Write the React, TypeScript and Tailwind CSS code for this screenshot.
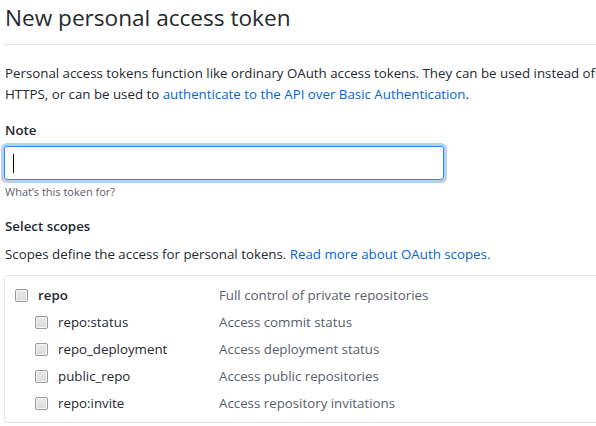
import type { ReactNode } from 'react';

const font = { fontFamily: '"Open Sans", "Noto Sans", sans-serif' };

interface Scope {
  name: string;
  description: string;
  child?: boolean;
}

const scopes: Scope[] = [
  { name: 'repo', description: 'Full control of private repositories' },
  { name: 'repo:status', description: 'Access commit status', child: true },
  { name: 'repo_deployment', description: 'Access deployment status', child: true },
  { name: 'public_repo', description: 'Access public repositories', child: true },
  { name: 'repo:invite', description: 'Access repository invitations', child: true }
];

function Checkbox() {
  return (
    <span className="inline-block w-[13px] h-[13px] shrink-0 rounded-[2px] border border-[#9a9a9a] bg-gradient-to-b from-[#e9e9e9] to-[#dcdcdc] shadow-[inset_0_0_0_1px_#f4f4f4]" />
  );
}

function Link({ children }: { children: ReactNode }) {
  return <a className="text-[#0366d6]">{children}</a>;
}

function ScopeRow({ scope }: { scope: Scope }) {
  return (
    <div className="flex items-center h-[27px] whitespace-nowrap">
      <div className={`flex items-center gap-[10px] w-[204px] shrink-0 ${scope.child ? 'pl-[20px]' : ''}`}>
        <Checkbox />
        <span className={scope.child ? 'text-[#24292e]' : 'text-[#24292e] font-semibold'}>{scope.name}</span>
      </div>
      <span className="text-[#586069]">{scope.description}</span>
    </div>
  );
}

export default function App() {
  return (
    <div className="w-[596px] h-[426px] overflow-hidden bg-white" style={font}>
      <div className="w-[780px] pl-[4px] text-[13.3px] leading-[21px] text-[#24292e]">
        {/* Subhead */}
        <div className="border-b border-[#e1e4e8] pb-[8px] mb-[18px]">
          <h2 className="text-[22.6px] leading-[36px] font-normal pl-[1px]">New personal access token</h2>
        </div>

        <p className="pl-[1px] whitespace-nowrap">
          Personal access tokens function like ordinary OAuth access tokens. They can be used instead of a password for Git over
          <br />
          HTTPS, or can be used to <Link>authenticate to the API over Basic Authentication</Link>.
        </p>

        {/* Note field */}
        <div className="mt-[15px]">
          <label className="block font-semibold pl-[1px]">Note</label>
          <div className="mt-[5px] w-[440px] h-[34px] rounded-[3px] border border-[#2188ff] shadow-[0_0_0_3px_rgba(3,102,214,0.3)] flex items-center pl-[8px]">
            <span className="w-px h-[19px] bg-black" />
          </div>
          <p className="mt-[3px] text-[11px] leading-[18px] text-[#586069] pl-[1px]">What’s this token for?</p>
        </div>

        {/* Scopes */}
        <div className="mt-[15px]">
          <h3 className="font-semibold pl-[1px]">Select scopes</h3>
          <p className="mt-[7px] pl-[1px]">
            Scopes define the access for personal tokens. <Link>Read more about OAuth scopes.</Link>
          </p>
          <div className="mt-[10px] border border-[#e1e4e8] rounded-[3px] pl-[10px] pt-[6px] pb-[5px]">
            {scopes.map((s) => (
              <ScopeRow key={s.name} scope={s} />
            ))}
          </div>
        </div>
      </div>
    </div>
  );
}
